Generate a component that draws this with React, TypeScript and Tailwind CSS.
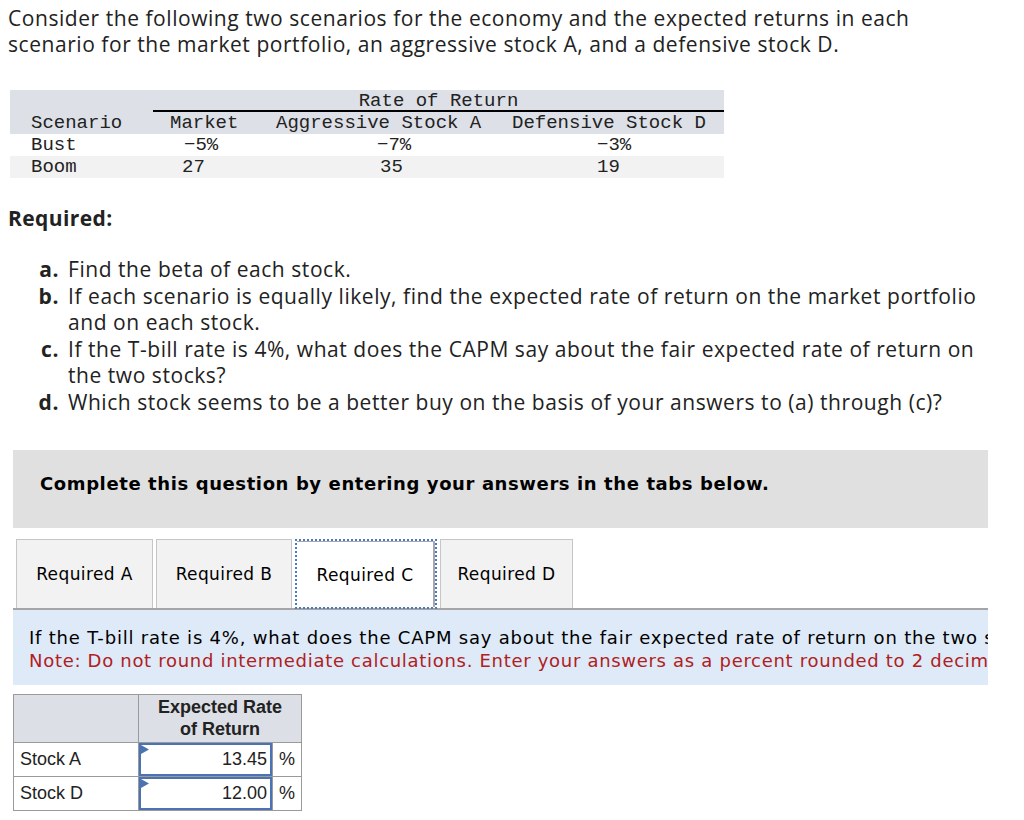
import React from "react";

const sans = { fontFamily: '"Open Sans", "Liberation Sans", sans-serif' };

function DataTable() {
  return (
    <div className="ml-[10px] mt-[33px] w-[714px] font-['Liberation_Mono',monospace] text-[19px] leading-[22px] text-[#222]">
      <div className="flex h-[22px] bg-[#dde0e6]">
        <div className="w-[143px]" />
        <div className="flex-1 border-b-2 border-black text-center">Rate of Return</div>
      </div>
      <div className="flex h-[22px] bg-[#dde0e6]">
        <div className="w-[143px] pl-[21px]">Scenario</div>
        <div className="w-[110px] pl-[17px]">Market</div>
        <div className="w-[234px] pl-[13px]">Aggressive Stock A</div>
        <div className="flex-1 pl-[15px]">Defensive Stock D</div>
      </div>
      <div className="flex h-[22px] bg-white">
        <div className="w-[143px] pl-[21px]">Bust</div>
        <div className="w-[110px] pl-[31px]">−5%</div>
        <div className="w-[234px] pl-[114px]">−7%</div>
        <div className="flex-1 pl-[100px]">−3%</div>
      </div>
      <div className="flex h-[22px] bg-[#f2f2f2]">
        <div className="w-[143px] pl-[21px]">Boom</div>
        <div className="w-[110px] pl-[29px]">27</div>
        <div className="w-[234px] pl-[117px]">35</div>
        <div className="flex-1 pl-[100px]">19</div>
      </div>
    </div>
  );
}

function Item({ label, children }: { label: string; children: React.ReactNode }) {
  return (
    <div className="flex">
      <div className="w-[63px] shrink-0 pr-[4px] text-right font-bold">{label}</div>
      <div className="ml-[5px]">{children}</div>
    </div>
  );
}

function Tab({ label, w }: { label: string; w: string }) {
  return (
    <div
      className={
        "flex h-[69px] items-center justify-center border border-b-0 border-[#c6c6c6] bg-[#f2f2f2] pt-[3px] " + w
      }
    >
      {label}
    </div>
  );
}

function ActiveTab({ label }: { label: string }) {
  return (
    <div className="h-[70px] w-[142px] border-2 border-dotted border-[#4a78c2]">
      <div className="flex h-full items-center justify-center border-r-2 border-t border-[#a8a8a8] bg-white pt-[3px]">
        {label}
      </div>
    </div>
  );
}

function AnswerRow({ name, value }: { name: string; value: string }) {
  return (
    <div className="flex h-[34px] border-t border-[#9a9a9a]">
      <div className="flex w-[125px] items-center border-r border-[#9a9a9a] pl-[6px]">{name}</div>
      <div className="relative flex w-[133px] items-center justify-end border-2 border-[#4b73b4] bg-white pr-[3px]">
        <svg className="absolute left-0 top-0" width="8" height="9" viewBox="0 0 8 9">
          <polygon points="0,0 8,4.5 0,9" fill="#4b73b4" />
        </svg>
        {value}
      </div>
      <div className="flex flex-1 items-center justify-center border-l border-[#9a9a9a]">%</div>
    </div>
  );
}

export default function App() {
  return (
    <div className="relative h-[820px] w-[1024px] overflow-hidden bg-white text-[#222]">
      <div style={sans} className="pl-[8px] pt-[5px] text-[21px] leading-[26px] tracking-[0.55px] text-[#222]">
        Consider the following two scenarios for the economy and the expected returns in each
        <br />
        scenario for the market portfolio, an aggressive stock A, and a defensive stock D.
      </div>

      <DataTable />

      <div style={sans} className="mt-[27px] pl-[8px] text-[21px] font-bold leading-[26px] tracking-[0.4px]">
        Required:
      </div>

      <div style={sans} className="mt-[25px] text-[21px] leading-[26.6px] tracking-[0.55px]">
        <Item label="a.">Find the beta of each stock.</Item>
        <Item label="b.">
          If each scenario is equally likely, find the expected rate of return on the market portfolio
          <br />
          and on each stock.
        </Item>
        <Item label="c.">
          If the T-bill rate is 4%, what does the CAPM say about the fair expected rate of return on
          <br />
          the two stocks?
        </Item>
        <Item label="d.">Which stock seems to be a better buy on the basis of your answers to (a) through (c)?</Item>
      </div>

      <div className="ml-[13px] mt-[34px] flex h-[78px] w-[975px] items-center bg-[#e0e0e0] pb-[10px] pl-[27px] font-['DejaVu_Sans',sans-serif] text-[18px] font-bold tracking-[0.6px] text-black">
        Complete this question by entering your answers in the tabs below.
      </div>

      <div className="ml-[16px] mt-[11px] flex items-end gap-[3px] font-['DejaVu_Sans',sans-serif] text-[17px] tracking-[0.4px] text-black">
        <Tab label="Required A" w="w-[137px]" />
        <Tab label="Required B" w="w-[136px]" />
        <div className="-mb-[1px]">
          <ActiveTab label="Required C" />
        </div>
        <Tab label="Required D" w="w-[133px]" />
      </div>

      <div className="ml-[13px] h-[77px] w-[975px] overflow-hidden whitespace-nowrap border-t-2 border-[#a5a5a5] bg-[#deeaf7] pl-[16px] pt-[16px] font-['DejaVu_Sans',sans-serif] text-[18px] leading-[23px]">
        <div className="tracking-[0.8px] text-black">
          If the T-bill rate is 4%, what does the CAPM say about the fair expected rate of return on the two stocks?
        </div>
        <div className="tracking-[0.7px] text-[#b0201e]">
          Note: Do not round intermediate calculations. Enter your answers as a percent rounded to 2 decimal places.
        </div>
      </div>

      <div className="ml-[13px] mt-[9px] w-[289px] border border-[#9a9a9a] font-['Liberation_Sans',sans-serif] text-[18px] text-[#222]">
        <div className="flex h-[47px] bg-[#dcdfe6]">
          <div className="w-[125px] border-r border-[#9a9a9a]" />
          <div className="flex flex-1 items-center justify-center text-center font-bold leading-[22px]">
            Expected Rate
            <br />
            of Return
          </div>
        </div>
        <AnswerRow name="Stock A" value="13.45" />
        <AnswerRow name="Stock D" value="12.00" />
      </div>
    </div>
  );
}
